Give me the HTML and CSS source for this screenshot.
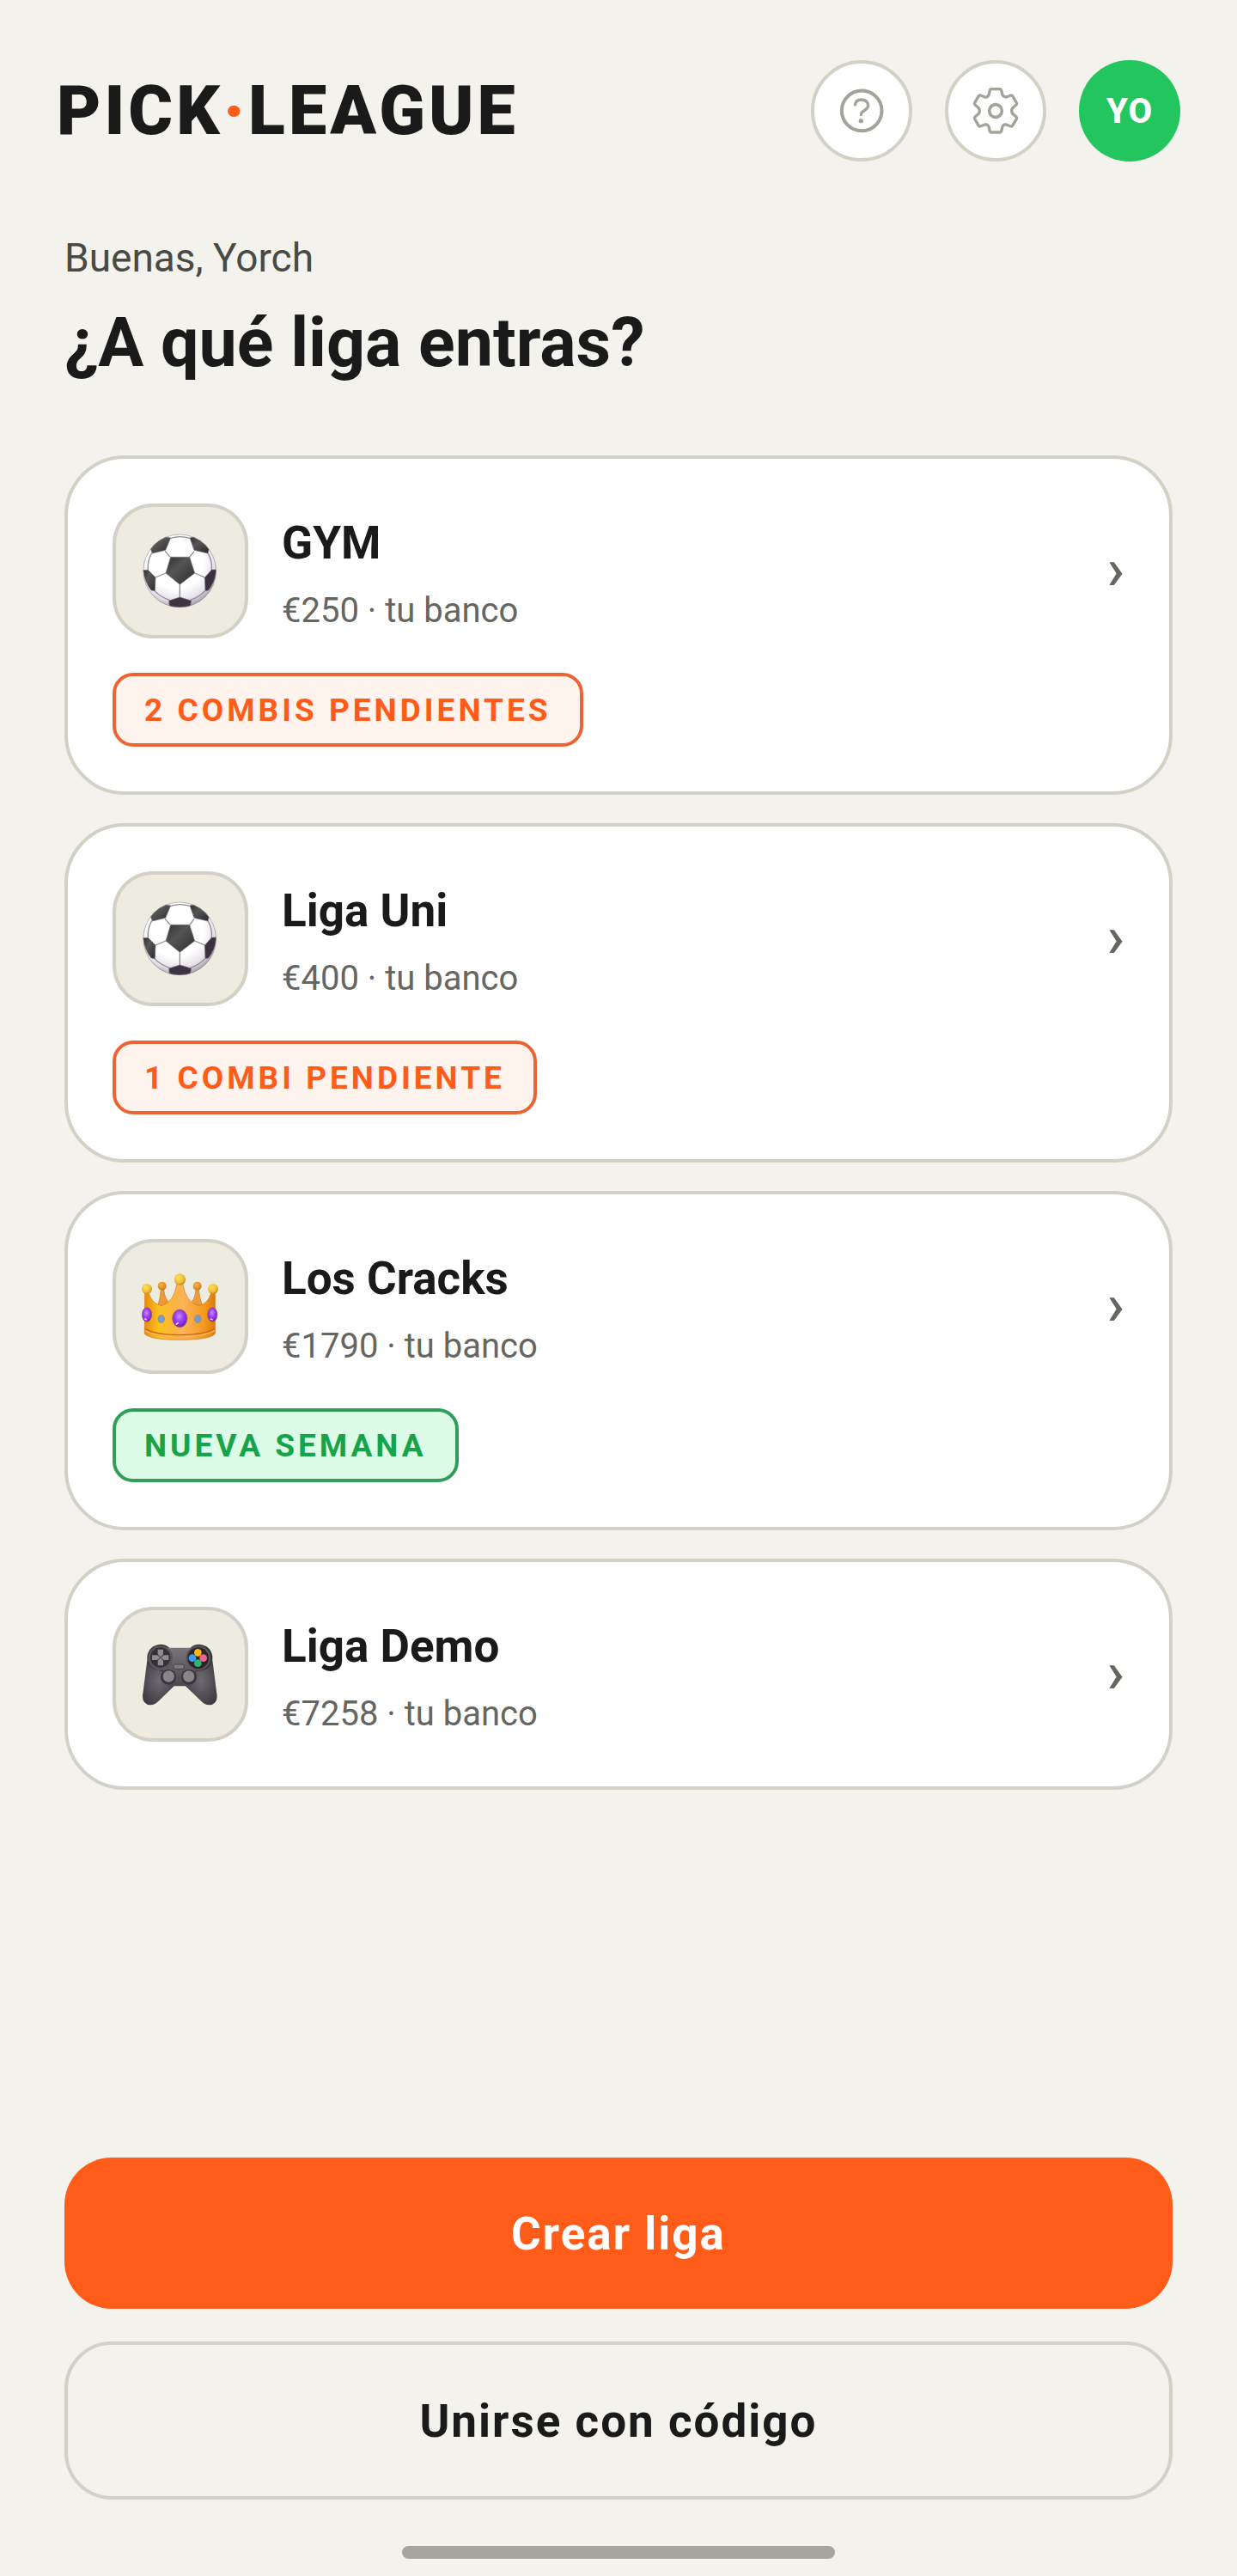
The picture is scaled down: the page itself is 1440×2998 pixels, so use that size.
FILE: index.html
```html
<!DOCTYPE html>
<html lang="es">
<head>
  <meta charset="utf-8">
  <meta name="viewport" content="width=device-width, initial-scale=1">
  <title>Pick·League</title>
  <link rel="stylesheet" href="styles.css">
</head>
<body>
  <svg class="defs" aria-hidden="true">
    <defs>
      <radialGradient id="ball-white" cx="45%" cy="38%" r="62%">
        <stop offset="0.6" stop-color="#ffffff"/>
        <stop offset="0.85" stop-color="#e6e2ea"/>
        <stop offset="1" stop-color="#a9a4ad"/>
      </radialGradient>
      <linearGradient id="ball-black" x1="0" y1="0" x2="1" y2="1">
        <stop offset="0" stop-color="#303030"/>
        <stop offset="0.4" stop-color="#555555"/>
        <stop offset="1" stop-color="#2b2a2d"/>
      </linearGradient>
      <clipPath id="ball-clip"><circle cx="267.500" cy="282" r="128"/></clipPath>
      <symbol id="ball" viewBox="126 140 288 288">
        <circle cx="267.500" cy="282" r="128" fill="url(#ball-white)"/>
        <g clip-path="url(#ball-clip)">
          <g fill="none" stroke="#8e8b92" stroke-width="4">
            <path d="M235 234L216 213M302 234L318 214M219 290L183 305M320 290L355 305M268 330V375"/>
            <path d="M236 168Q268 158 303 168M170 220Q154 248 157 280M366 220Q382 248 379 278M180 352Q200 374 232 384M356 352Q336 374 305 384"/>
          </g>
          <g fill="url(#ball-black)" stroke="#77747a" stroke-width="2">
            <path d="M236 234H302L320 290L268 330L219 290Z"/>
            <path d="M236 167L218 210L172 221L166 205Q188 174 214 163Z"/>
            <path d="M303 167L318 210L366 221L370 205Q350 174 320 163Z"/>
            <path d="M140 280L157 279L183 305L181 352L168 350Q144 320 140 280Z"/>
            <path d="M396 278L379 278L355 306L357 352L368 350Q392 320 396 278Z" fill="#3c3040"/>
            <path d="M268 374L308 386L304 408Q268 416 232 408L230 386Z" fill="#3c3343"/>
          </g>
        </g>
        <circle cx="267.500" cy="282" r="127" fill="none" stroke="#8d8991" stroke-opacity="0.6" stroke-width="3"/>
      </symbol>

      <linearGradient id="gold" x1="0" y1="0" x2="1" y2="0">
        <stop offset="0" stop-color="#e88a12"/>
        <stop offset="0.2" stop-color="#fdc11f"/>
        <stop offset="0.45" stop-color="#fbb443"/>
        <stop offset="0.55" stop-color="#fbb25c"/>
        <stop offset="0.85" stop-color="#f39a1b"/>
        <stop offset="1" stop-color="#e0780f"/>
      </linearGradient>
      <radialGradient id="pearl" cx="40%" cy="35%" r="65%">
        <stop offset="0" stop-color="#fde35c"/>
        <stop offset="0.7" stop-color="#f0bb35"/>
        <stop offset="1" stop-color="#c68a1b"/>
      </radialGradient>
      <radialGradient id="pearl-back" cx="40%" cy="35%" r="65%">
        <stop offset="0" stop-color="#fbb54a"/>
        <stop offset="1" stop-color="#cf7d1c"/>
      </radialGradient>
      <radialGradient id="gem" cx="45%" cy="38%" r="62%">
        <stop offset="0" stop-color="#c98bff"/>
        <stop offset="0.5" stop-color="#9a3df2"/>
        <stop offset="1" stop-color="#6c1fc4"/>
      </radialGradient>
      <symbol id="crown" viewBox="126 142 288 288">
        <path d="M202 226H212Q216 262 236 276L216 288L192 280Q200 250 202 226ZM324 226H334Q336 250 346 280L322 290L304 276Q320 262 324 226Z" fill="#ec9a3a" stroke="#cb7a22" stroke-width="2"/>
        <circle cx="206" cy="213" r="15" fill="url(#pearl-back)"/>
        <circle cx="329" cy="213" r="15" fill="url(#pearl-back)"/>
        <path d="M146 238H159Q172 276 204 282Q248 270 258 204H278Q288 270 334 282Q366 276 377 238H391V380Q372 401 268 401Q164 401 145 380Z" fill="url(#gold)" stroke="#cf7a16" stroke-width="2"/>
        <path d="M146 362Q180 383 268 384Q356 383 390 362" fill="none" stroke="#cf6a18" stroke-width="4"/>
        <path d="M147 369Q180 389 268 390Q356 389 389 369" fill="none" stroke="#fbb35c" stroke-width="4"/>
        <circle cx="153" cy="223" r="18" fill="url(#pearl)"/>
        <circle cx="268" cy="190" r="20" fill="url(#pearl)"/>
        <circle cx="384" cy="223" r="18" fill="url(#pearl)"/>
        <ellipse cx="268" cy="326" rx="26" ry="31" fill="url(#gem)" stroke="#a2643c" stroke-width="2"/>
        <ellipse cx="153" cy="313" rx="17" ry="25" fill="url(#gem)" stroke="#a2643c" stroke-width="2"/>
        <ellipse cx="382" cy="313" rx="17" ry="25" fill="url(#gem)" stroke="#a2643c" stroke-width="2"/>
        <ellipse cx="203" cy="328" rx="11" ry="13" fill="#6b9ce8" stroke="#b3875a" stroke-width="3"/>
        <ellipse cx="331" cy="328" rx="11" ry="13" fill="#6b9ce8" stroke="#b3875a" stroke-width="3"/>
        <path d="M256 346L262 342M146 328L151 330M376 328L381 330" stroke="#ecd2ff" stroke-width="5" stroke-linecap="round"/>
      </symbol>

      <linearGradient id="pad-body" x1="0" y1="0" x2="0" y2="1">
        <stop offset="0" stop-color="#77747a"/>
        <stop offset="1" stop-color="#4c494e"/>
      </linearGradient>
      <radialGradient id="pad-grip" cx="50%" cy="45%" r="60%">
        <stop offset="0" stop-color="#6f6b71"/>
        <stop offset="1" stop-color="#3f3b42"/>
      </radialGradient>
      <symbol id="gamepad" viewBox="126 136 288 288">
        <path d="M154 230L138 354Q137 384 166 386Q180 386 192 374L252 316L230 260Z" fill="url(#pad-grip)"/>
        <path d="M382 230L398 354Q399 384 370 386Q356 386 344 374L284 316L306 260Z" fill="url(#pad-grip)"/>
        <path d="M200 174Q220 174 232 187H304Q316 174 336 174Q376 178 382 216Q384 252 350 264Q330 266 322 270Q332 300 306 312Q290 318 272 300H262Q244 318 226 312Q202 300 208 270Q200 264 186 264Q152 252 154 216Q160 178 200 174Z" fill="#3a373c"/>
        <path d="M222 186H314L326 262L290 320H246L208 262Z" fill="url(#pad-body)"/>
        <circle cx="200" cy="222" r="43" fill="#5a575c"/>
        <circle cx="332" cy="222" r="43" fill="#5a575c"/>
        <circle cx="228" cy="288" r="27" fill="#39363b"/>
        <circle cx="300" cy="288" r="27" fill="#39363b"/>
        <circle cx="200" cy="220" r="35" fill="#343136"/>
        <circle cx="332" cy="222" r="37" fill="#29262b"/>
        <path d="M191 192H210V209L200 219L191 209ZM191 248H210V231L200 221L191 231ZM171 212H189L199 220L189 229H171ZM229 212H212L202 220L212 229H229Z" fill="#8e8b90"/>
        <circle cx="331" cy="203" r="13" fill="#fdb515"/>
        <circle cx="312" cy="222" r="13" fill="#3a9ff0"/>
        <circle cx="350" cy="222" r="13" fill="#f0648f"/>
        <circle cx="331" cy="240" r="13" fill="#2fb571"/>
        <circle cx="229" cy="286" r="20" fill="#89868b"/>
        <circle cx="299" cy="286" r="20" fill="#89868b"/>
        <rect x="246" y="244" width="37" height="16" rx="4" fill="#7e7b80" stroke="#414045" stroke-width="3"/>
      </symbol>
    </defs>
  </svg>

  <div class="screen">
    <header class="topbar">
      <div class="logo">PICK<span class="logo-dot">·</span>LEAGUE</div>
      <nav class="actions" aria-label="Cuenta">
        <button class="round-button" type="button" aria-label="Ayuda">
          <svg class="action-icon" viewBox="144 128 216 216" aria-hidden="true">
            <circle cx="252.500" cy="235.500" r="70" stroke-width="12"/>
            <path d="M229 215Q232 197 251 197Q274 198 275 217Q275 225 264 233Q250 242 250 250" stroke-width="10"/>
            <circle class="icon-dot" cx="250" cy="271" r="8"/>
          </svg>
        </button>
        <button class="round-button" type="button" aria-label="Ajustes">
          <svg class="action-icon" viewBox="612 128 216 216" aria-hidden="true">
            <path stroke-width="10" d="M704 160H736Q739 160 740 164L743 178Q747 188 757 188L773 182Q777 181 779 184L793 208Q795 212 792 215L779 226Q773 236 779 246L792 257Q795 260 793 264L779 288Q777 291 773 290L757 284Q747 282 743 294L740 308Q739 311 736 311H704Q701 311 700 308L697 294Q693 282 683 284L667 290Q663 291 661 288L647 264Q645 260 648 257L661 246Q667 236 661 226L648 215Q645 212 647 208L661 184Q663 181 667 182L683 188Q693 190 697 178L700 164Q701 160 704 160Z"/>
            <circle cx="720" cy="236" r="22" stroke-width="11"/>
          </svg>
        </button>
        <button class="round-button avatar" type="button">YO</button>
      </nav>
    </header>

    <main class="content">
      <p class="greeting">Buenas, Yorch</p>
      <h1 class="title">¿A qué liga entras?</h1>

      <ul class="leagues">
        <li>
          <a class="card" href="#gym">
            <span class="card-row">
              <span class="tile"><svg class="emoji" aria-hidden="true"><use href="#ball"/></svg></span>
              <span class="info"><span class="name">GYM</span><span class="bank">€250 · tu banco</span></span>
              <span class="chevron" aria-hidden="true">›</span>
            </span>
            <span class="badge badge-pending">2 COMBIS PENDIENTES</span>
          </a>
        </li>
        <li>
          <a class="card" href="#liga-uni">
            <span class="card-row">
              <span class="tile"><svg class="emoji" aria-hidden="true"><use href="#ball"/></svg></span>
              <span class="info"><span class="name">Liga Uni</span><span class="bank">€400 · tu banco</span></span>
              <span class="chevron" aria-hidden="true">›</span>
            </span>
            <span class="badge badge-pending">1 COMBI PENDIENTE</span>
          </a>
        </li>
        <li>
          <a class="card" href="#los-cracks">
            <span class="card-row">
              <span class="tile"><svg class="emoji" aria-hidden="true"><use href="#crown"/></svg></span>
              <span class="info"><span class="name">Los Cracks</span><span class="bank">€1790 · tu banco</span></span>
              <span class="chevron" aria-hidden="true">›</span>
            </span>
            <span class="badge badge-new">NUEVA SEMANA</span>
          </a>
        </li>
        <li>
          <a class="card" href="#liga-demo">
            <span class="card-row">
              <span class="tile"><svg class="emoji" aria-hidden="true"><use href="#gamepad"/></svg></span>
              <span class="info"><span class="name">Liga Demo</span><span class="bank">€7258 · tu banco</span></span>
              <span class="chevron" aria-hidden="true">›</span>
            </span>
          </a>
        </li>
      </ul>
    </main>

    <footer class="footer">
      <button class="button button-primary" type="button">Crear liga</button>
      <button class="button button-outline" type="button">Unirse con código</button>
      <div class="home-indicator"></div>
    </footer>
  </div>
</body>
</html>
```
FILE: styles.css
```css
:root {
  --bg: #f3f2ec;
  --ink: #1a1a1a;
  --line: #d3d0c5;
  --orange: #ff5c1a;
  --green: #16a34a;
}

* {
  box-sizing: border-box;
}

body {
  margin: 0;
  background: var(--bg);
  color: var(--ink);
  font-family: Roboto, "Liberation Sans", sans-serif;
}

button {
  font: inherit;
  color: inherit;
  cursor: pointer;
}

.defs {
  display: block;
  width: 0;
  height: 0;
}

.screen {
  display: flex;
  flex-direction: column;
  min-height: 100vh;
}

.topbar {
  display: flex;
  align-items: center;
  justify-content: space-between;
  padding: 70px 66px 0;
}

.logo {
  font-size: 79px;
  font-weight: 900;
  line-height: 92px;
  letter-spacing: 4px;
}

.logo-dot {
  color: var(--orange);
}

.actions {
  display: flex;
  gap: 38px;
}

.round-button {
  display: flex;
  align-items: center;
  justify-content: center;
  width: 118px;
  height: 118px;
  padding: 0;
  border: 4px solid var(--line);
  border-radius: 50%;
  background: #fff;
}

.avatar {
  border: 0;
  background: #22c55e;
  color: #fff;
  font-size: 40px;
  font-weight: 800;
  letter-spacing: 1px;
}

.action-icon {
  width: 72px;
  height: 72px;
  flex: none;
  fill: none;
  stroke: #a3a29b;
  stroke-linecap: round;
  stroke-linejoin: round;
}

.icon-dot {
  fill: #a3a29b;
  stroke: none;
}

.content {
  padding: 84px 75px;
}

.greeting {
  margin: 0 0 25px;
  color: #4a4a45;
  font-size: 46px;
  line-height: 56px;
}

.title {
  margin: 0 0 85px;
  font-size: 79px;
  font-weight: 700;
  line-height: 92px;
}

.leagues {
  display: flex;
  flex-direction: column;
  gap: 33px;
  margin: 0;
  padding: 0;
  list-style: none;
}

.card {
  display: flex;
  flex-direction: column;
  align-items: flex-start;
  gap: 40px;
  padding: 52px;
  border: 4px solid var(--line);
  border-radius: 70px;
  background: #fff;
  color: inherit;
  text-decoration: none;
}

.card-row {
  display: flex;
  align-items: center;
  gap: 39px;
  width: 100%;
}

.tile {
  display: flex;
  align-items: center;
  justify-content: center;
  flex: none;
  width: 158px;
  height: 157px;
  border: 4px solid var(--line);
  border-radius: 47px;
  background: #eeebe0;
}

.emoji {
  width: 96px;
  height: 96px;
  flex: none;
}

.info {
  display: flex;
  flex: 1;
  flex-direction: column;
  gap: 27px;
  padding-top: 2px;
}

.name {
  font-size: 53px;
  font-weight: 700;
  line-height: 64px;
}

.bank {
  color: #666660;
  font-size: 40px;
  line-height: 40px;
}

.chevron {
  padding-bottom: 3px;
  color: #666660;
  font-size: 68px;
  font-weight: 500;
  line-height: 64px;
}

.badge {
  padding: 15px 33px 13px;
  border: 4px solid;
  border-radius: 24px;
  font-size: 37px;
  font-weight: 700;
  line-height: 50px;
  letter-spacing: 4px;
}

.badge-pending {
  border-color: #ec6433;
  background: #fff3ee;
  color: var(--orange);
}

.badge-new {
  border-color: #2f9e59;
  background: #dcfce7;
  color: var(--green);
}

.footer {
  display: flex;
  flex-direction: column;
  gap: 38px;
  margin-top: auto;
  padding: 0 75px 20px;
}

.button {
  width: 100%;
  padding: 57px 56px 55px;
  border: 0;
  border-radius: 55px;
  background: none;
  font-size: 53px;
  font-weight: 700;
  line-height: 64px;
  letter-spacing: 2px;
}

.button-primary {
  background: var(--orange);
  color: #fff;
}

.button-outline {
  border: 4px solid var(--line);
}

.home-indicator {
  align-self: center;
  width: 39%;
  height: 15px;
  margin-top: 16px;
  border-radius: 8px;
  background: #a6a5a0;
}
```
